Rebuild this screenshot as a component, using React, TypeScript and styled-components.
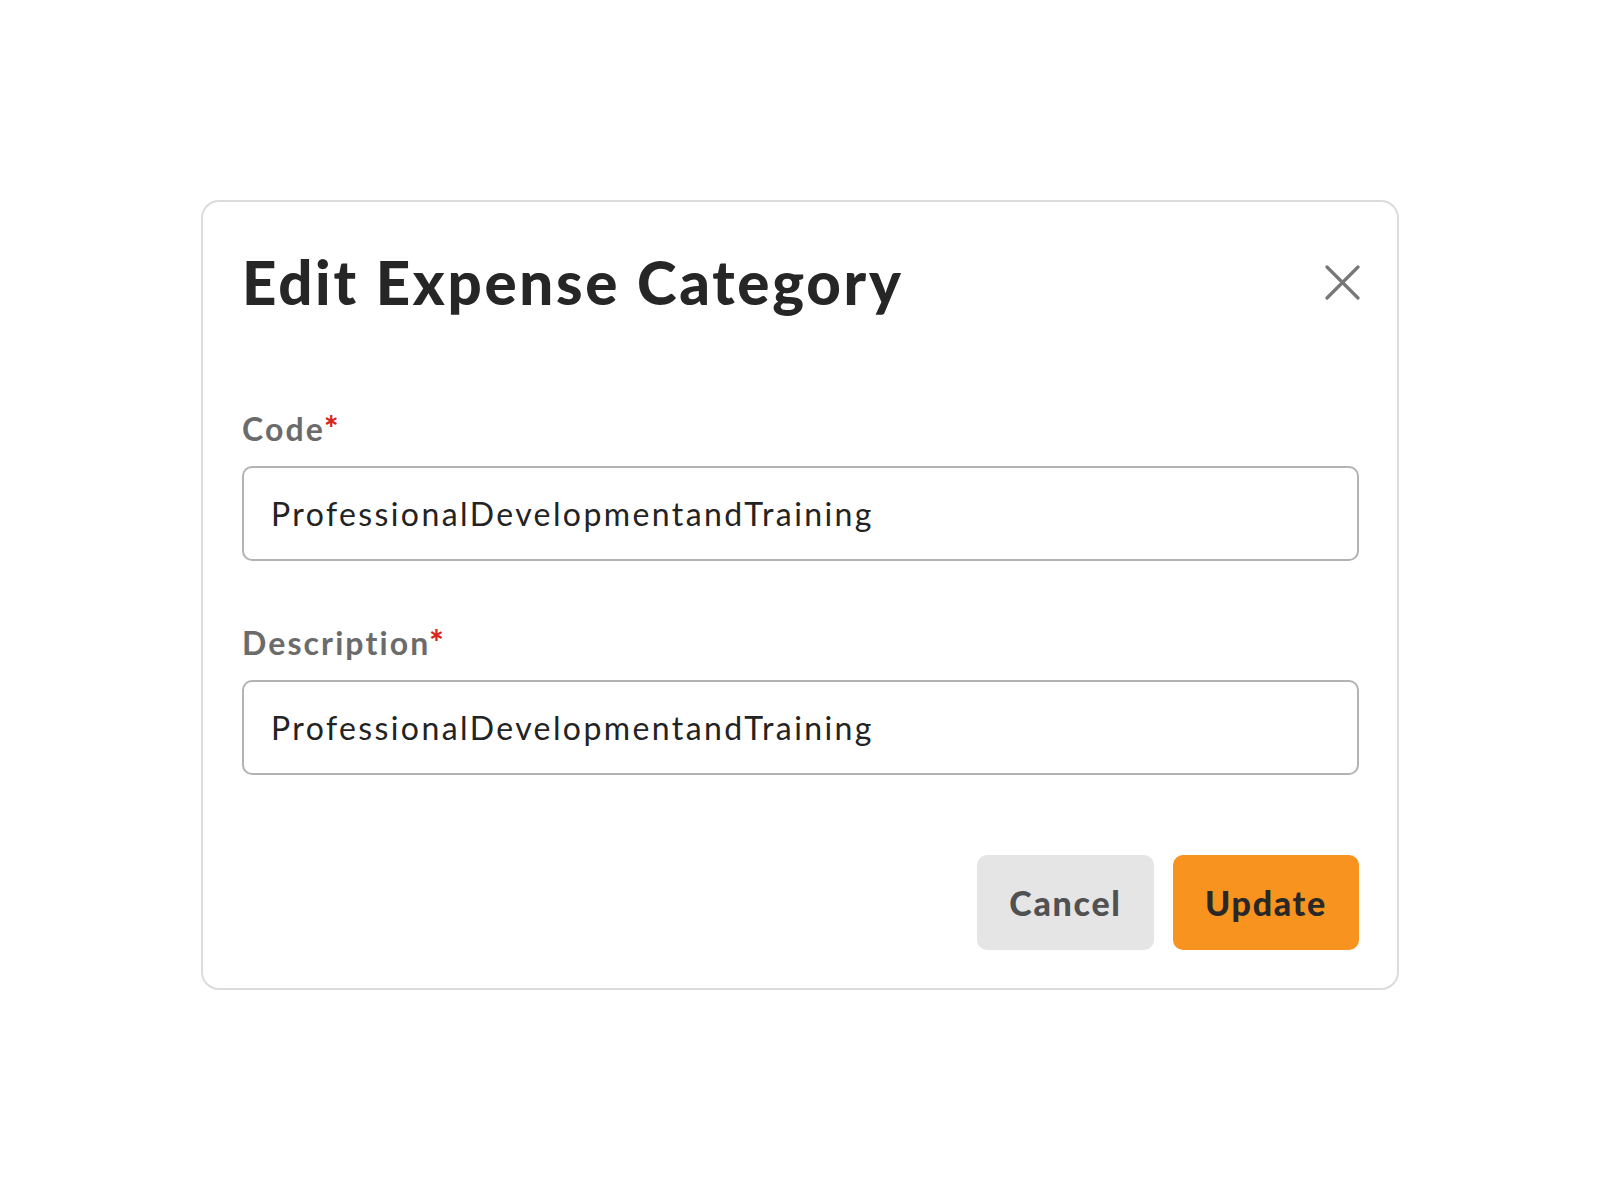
import React from "react";
import styled, { createGlobalStyle } from "styled-components";

const Global = createGlobalStyle`
  html, body { margin: 0; padding: 0; background: #ffffff; }
  body { font-family: Lato, "Noto Sans", sans-serif; }
  * { box-sizing: border-box; }
`;

const Page = styled.div`
  width: 1600px;
  min-height: 1192px;
  padding: 200px 0 0 201px;
  background: #fff;
`;

const Card = styled.div`
  width: 1198px;
  border: 2px solid #dcdcdc;
  border-radius: 18px;
  padding: 44px 38px 38px 39px;
  display: flex;
  flex-direction: column;
  background: #fff;
`;

const Header = styled.div`
  display: flex;
  align-items: center;
  justify-content: space-between;
`;

const Title = styled.h1`
  margin: 0;
  font-family: Lato, sans-serif;
  font-weight: 900;
  font-size: 60px;
  line-height: 72px;
  color: #262626;
  letter-spacing: 2.7px;
`;

const CloseButton = styled.button`
  border: none;
  background: none;
  padding: 0;
  width: 35px;
  height: 35px;
  display: flex;
  align-items: center;
  justify-content: center;
  cursor: pointer;
  margin-right: -1px;
`;

const Field = styled.div<{ $top: number }>`
  display: flex;
  flex-direction: column;
  gap: 18px;
  margin-top: ${(p) => p.$top}px;
`;

const Label = styled.label`
  display: block;
  height: 38px;
  font-family: Lato, sans-serif;
  font-weight: 700;
  font-size: 32px;
  line-height: 38px;
  letter-spacing: 2.1px;
  color: #6b6b6b;
`;

const Star = styled.span`
  color: #d7261e;
  font-weight: 900;
  font-size: 34px;
  line-height: 0;
  letter-spacing: 0;
  margin-left: -1px;
`;

const Input = styled.input`
  width: 100%;
  height: 95px;
  border: 2px solid #b3b3b3;
  border-radius: 10px;
  padding: 0 27px;
  font-family: Lato, sans-serif;
  font-size: 32px;
  letter-spacing: 2.4px;
  color: #232323;
  background: #fff;
  outline: none;
`;

const Actions = styled.div`
  display: flex;
  justify-content: flex-end;
  gap: 19px;
  margin-top: 80px;
`;

const Button = styled.button<{ $primary?: boolean }>`
  height: 95px;
  width: ${(p) => (p.$primary ? 186 : 177)}px;
  padding: 0;
  border: none;
  border-radius: 10px;
  font-family: Lato, sans-serif;
  font-weight: 900;
  font-size: 34px;
  letter-spacing: 1.7px;
  cursor: pointer;
  background: ${(p) => (p.$primary ? "#f7931e" : "#e5e5e5")};
  color: ${(p) => (p.$primary ? "#282828" : "#515151")};
`;

export default function App() {
  return (
    <>
      <Global />
      <Page>
        <Card>
          <Header>
            <Title>Edit Expense Category</Title>
            <CloseButton aria-label="Close">
              <svg width="35" height="35" viewBox="0 0 35 35">
                <path d="M2 2 L33 33 M33 2 L2 33" stroke="#777777" strokeWidth="3.2" strokeLinecap="round" />
              </svg>
            </CloseButton>
          </Header>
          <Field $top={92}>
            <Label>
              Code<Star>*</Star>
            </Label>
            <Input defaultValue="ProfessionalDevelopmentandTraining" />
          </Field>
          <Field $top={63}>
            <Label>
              Description<Star>*</Star>
            </Label>
            <Input defaultValue="ProfessionalDevelopmentandTraining" />
          </Field>
          <Actions>
            <Button>Cancel</Button>
            <Button $primary>Update</Button>
          </Actions>
        </Card>
      </Page>
    </>
  );
}
